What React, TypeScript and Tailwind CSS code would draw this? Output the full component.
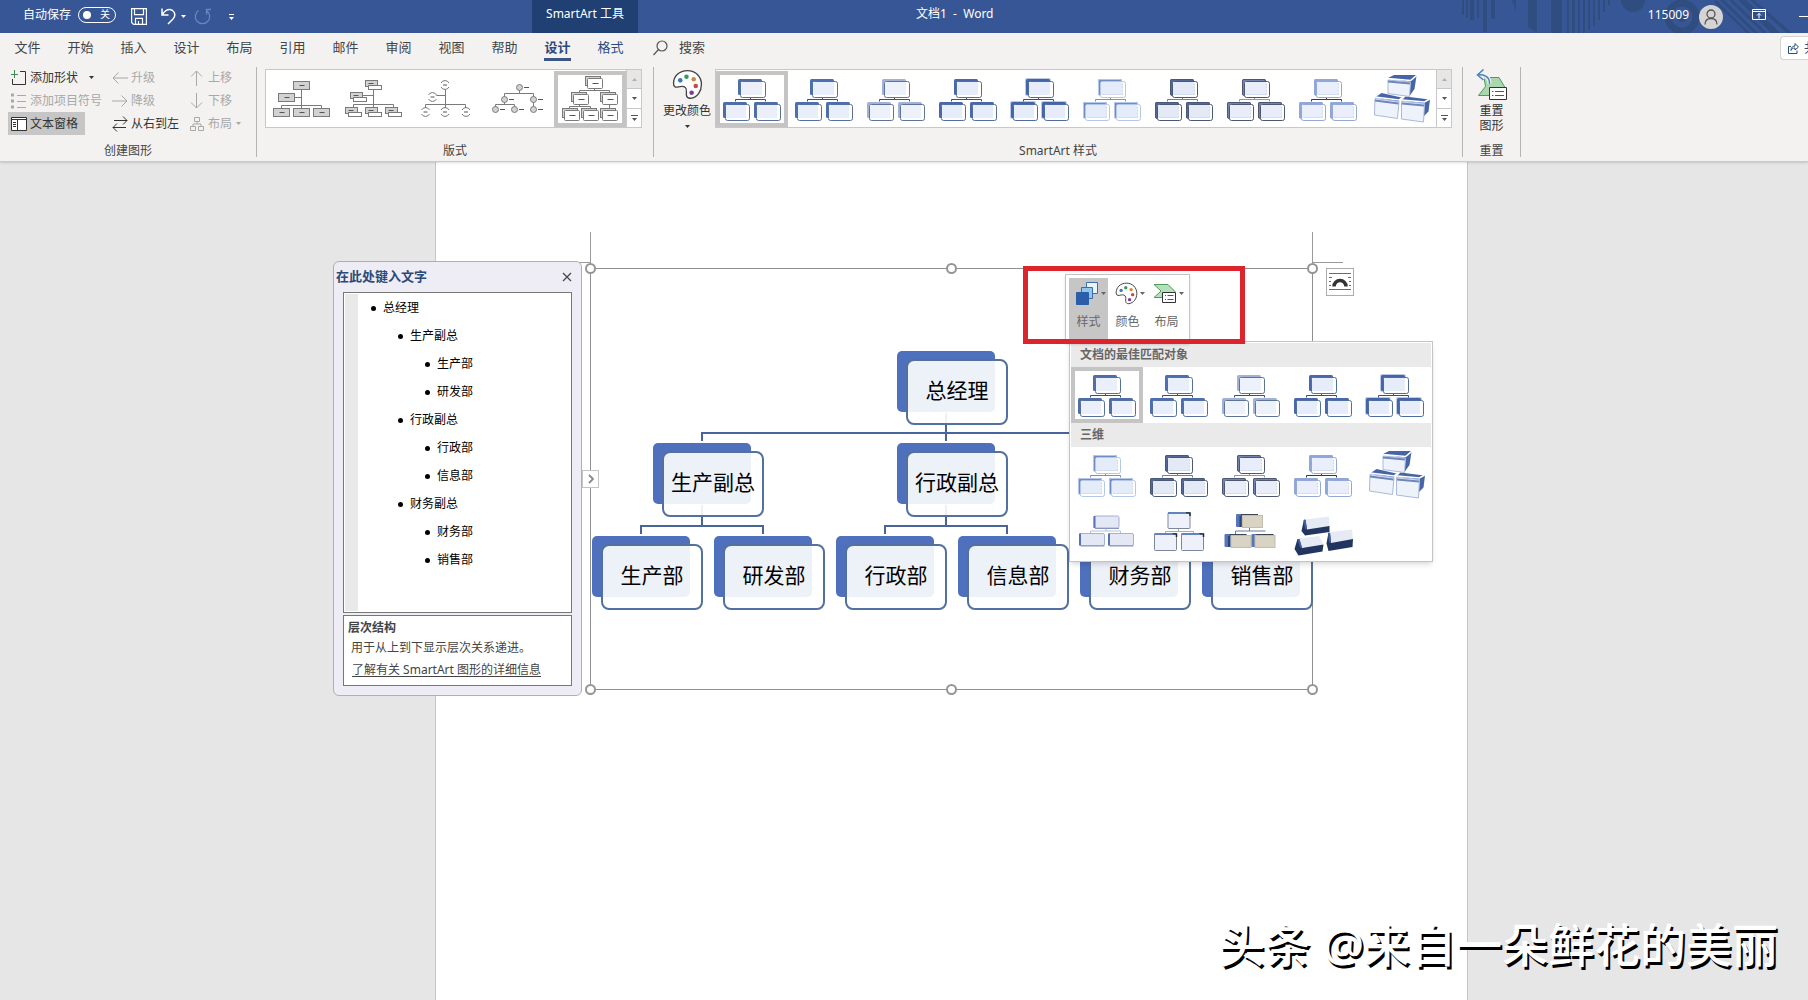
import type { ReactNode } from "react";

type ThumbStyle = {
  back: string;
  front: string;
  edge: string;
  line: string;
  glow?: boolean;
  bevel?: boolean;
};

const FLAT: ThumbStyle[] = [
  { back: "#4f6ea8", front: "#eaeffa", edge: "#54709c", line: "#3c4f70" },
  { back: "#4d6eb0", front: "#e8eefa", edge: "#54709c", line: "#3c4f70" },
  { back: "#a3b1d6", front: "#edf1fa", edge: "#5d7496", line: "#3c4f70" },
  { back: "#4a67ac", front: "#e6ecfa", edge: "#50709c", line: "#3c4f70" },
  { back: "#4565ab", front: "#e6ecfa", edge: "#4d6da0", line: "#3c4f70", glow: true },
];

const BEVELED: ThumbStyle[] = [
  { back: "#6f8cc6", front: "#e4ebf9", edge: "#b4c6ea", line: "#8193ac", bevel: true },
  { back: "#56689a", front: "#e4e9f6", edge: "#4a5878", line: "#6d7fa0", bevel: true },
  { back: "#7484ac", front: "#e8edf9", edge: "#4d5870", line: "#8a98ad", bevel: true },
  { back: "#8fa6da", front: "#e9eefa", edge: "#93a8d6", line: "#2d3a50", bevel: true },
];

const TABS = ["文件", "开始", "插入", "设计", "布局", "引用", "邮件", "审阅", "视图", "帮助", "设计", "格式"];

const OUTLINE = [
  { text: "总经理", level: 0 },
  { text: "生产副总", level: 1 },
  { text: "生产部", level: 2 },
  { text: "研发部", level: 2 },
  { text: "行政副总", level: 1 },
  { text: "行政部", level: 2 },
  { text: "信息部", level: 2 },
  { text: "财务副总", level: 1 },
  { text: "财务部", level: 2 },
  { text: "销售部", level: 2 },
];

const INDENT = ["pl-[13px]", "pl-[40px]", "pl-[67px]"];

// left/top of the coloured back plate, in document coordinates
const NODES = [
  { text: "总经理", x: 897, y: 189 },
  { text: "生产副总", x: 653, y: 281 },
  { text: "行政副总", x: 897, y: 281 },
  { text: "财务副总", x: 1141, y: 281 },
  { text: "生产部", x: 592, y: 374 },
  { text: "研发部", x: 714, y: 374 },
  { text: "行政部", x: 836, y: 374 },
  { text: "信息部", x: 958, y: 374 },
  { text: "财务部", x: 1080, y: 374 },
  { text: "销售部", x: 1202, y: 374 },
];

const HANDLES = [
  { x: 590, y: 106 },
  { x: 951, y: 106 },
  { x: 1312, y: 106 },
  { x: 590, y: 527 },
  { x: 951, y: 527 },
  { x: 1312, y: 527 },
];

function Caret({ className = "" }: { className?: string }) {
  return (
    <svg width="5" height="3" viewBox="0 0 5 3" className={`shrink-0 ${className}`} fill="currentColor">
      <path d="M0 0h5L2.5 3z" />
    </svg>
  );
}

function HierarchyThumb({ s }: { s: ThumbStyle }) {
  const boxes = [
    { bx: 22, by: 8, fx: 24.5, fy: 10.5, w: 25, h: 16 },
    { bx: 7, by: 31, fx: 9.5, fy: 33.5, w: 24, h: 16 },
    { bx: 38, by: 31, fx: 40.5, fy: 33.5, w: 24, h: 16 },
  ];
  return (
    <svg width="72" height="56" viewBox="0 0 72 56" fill="none">
      <path d="M19.500 30.500v-2h30v2M34.500 26v3" stroke={s.line} />
      {boxes.map((b) => (
        <g key={b.bx}>
          {s.glow && <rect x={b.bx - 1} y={b.by - 1} width="26" height="18" rx="2" fill={s.back} opacity="0.35" />}
          <rect x={b.bx} y={b.by} width="24" height="16" rx="1.5" fill={s.back} />
          {s.bevel && <rect x={b.bx + 0.5} y={b.by + 0.5} width="23" height="16" rx="1.5" stroke={s.edge} />}
          <rect x={b.fx} y={b.fy} width={b.w} height={b.h} rx="2" fill="#fff" stroke={s.edge} />
          <rect x={b.fx + 0.5} y={b.fy + 0.5} width={b.w - 4} height={b.h - 3} fill={s.front} />
          {s.bevel && (
            <path
              d={`M${b.fx + b.w - 3} ${b.fy + 2}v${b.h - 5}M${b.fx + 2} ${b.fy + b.h - 3}h${b.w - 5}`}
              stroke="#cdd7ec"
              strokeDasharray="2 1"
            />
          )}
        </g>
      ))}
    </svg>
  );
}

function BrickThumb() {
  return (
    <svg width="72" height="56" viewBox="0 0 72 56">
      <g fill="#4665a8">
        <path d="M24 7l6-3h22.500l-6 7zM46.500 11l6-6-2 13-5 7z" />
        <path d="M11 26.500l6.500-4.500 20 4.500-3 4z" />
        <path d="M37.500 29.500l4-4 24 3-5 4zM60.500 32l5.500-3.500-1.500 12-5 5z" />
      </g>
      <path d="M24 7.500l22.500 2 6-5M11 26l24 3 2.500-2M38 29l22.500 2 5-3" stroke="#fff" strokeWidth="1.500" fill="none" />
      <g fill="#eef2fb" stroke="#a9b9dc">
        <path d="M24 9l22.500 2-1 14.500-21.500-3z" />
        <path d="M11 27.500l24 3-1.500 17-23-3.500z" />
        <path d="M37.500 30.500l23 2-1 18.500-22-3z" />
      </g>
      <path d="M24 10.500l22 2M11 29.500l23.500 3M38 32.500l22 2" stroke="#6f86bb" strokeWidth="2" fill="none" />
    </svg>
  );
}

function InsetThumb() {
  const plates = [
    [23, 13],
    [8.5, 30.5],
    [37.5, 30.5],
  ];
  return (
    <svg width="72" height="56" viewBox="0 0 72 56" fill="none">
      <path d="M19.500 30v-2h30v2M35 26v2" stroke="#b6c0d2" />
      {plates.map(([x, y]) => (
        <g key={x}>
          <rect x={x} y={y} width="25" height="12" rx="1.500" fill="#e3e8f4" stroke="#a3b0d2" />
          <path d={`M${x + 0.5} ${y}v12`} stroke="#5873b3" strokeWidth="2" />
          <path d={`M${x + 1} ${y + 12.5}h24`} stroke="#8696bd" />
        </g>
      ))}
    </svg>
  );
}

function CartoonThumb() {
  const plates = [
    [25, 9.5, 16],
    [11.5, 30.5, 17],
    [38.5, 30.5, 17],
  ];
  return (
    <svg width="72" height="56" viewBox="0 0 72 56" fill="none">
      <path d="M22.500 30v-1.500h28v1.500M35.500 26v2" stroke="#a4adbd" />
      {plates.map(([x, y, h]) => (
        <g key={x}>
          <rect x={x} y={y} width="22" height={h} rx="1" fill="#eef1fa" stroke="#7d879c" />
          <path d={`M${x} ${y + 0.5}h18`} stroke="#6582c0" strokeWidth="2" />
          <path d={`M${x + 18} ${y + 0.5}h4v3`} stroke="#1d2740" strokeWidth="1.500" />
        </g>
      ))}
    </svg>
  );
}

function PowderThumb() {
  const plates = [
    [21, 11, 27.5],
    [9.5, 31, 16],
    [36.5, 31, 40],
  ];
  return (
    <svg width="72" height="56" viewBox="0 0 72 56" fill="none">
      <path d="M20.500 31v-3h30M34.500 25v3" stroke="#6d7890" />
      {plates.map(([x, y, fx]) => (
        <g key={x}>
          <rect x={x} y={y} width="22" height="13" rx="1" fill="#5576b8" />
          <path d={`M${x + 5} ${y + 1}h17`} stroke="#3c4456" strokeWidth="2" />
          <path d={`M${x + 4.5} ${y + 2}v11`} stroke="#2c427a" strokeWidth="2" />
          <rect x={fx} y={y + 1.5} width="20" height="12" fill="#d8d3c3" stroke="#c3bda9" />
        </g>
      ))}
    </svg>
  );
}

function BirdsEyeThumb() {
  return (
    <svg width="72" height="56" viewBox="0 0 72 56">
      <g fill="#22355f">
        <path d="M17 16.500L14.500 28l3.500 4.500L42.500 29v-6z" />
        <path d="M10.500 36L7.500 46l4 6.500 24-4 1-7z" />
        <path d="M41.500 29.500L39.500 40.500l2 7.500 24-4 .5-8z" />
      </g>
      <g fill="#e6eaf4">
        <path d="M18.500 16.500L42 13.500l.5 9.500L20 26.500z" />
        <path d="M12 35.500L32 33l4.500 8.500L15 45z" />
        <path d="M43 29L65 26.500l1 9.500L44 40z" />
      </g>
      <path d="M17.500 17l1.500 9M11.500 36l2.500 8.500M42 30l1 9.500" stroke="#3f5fa5" strokeWidth="2" fill="none" />
    </svg>
  );
}

function LayoutHierarchy() {
  return (
    <svg width="72" height="56" viewBox="0 0 72 56" fill="none" stroke="#7a7a7a">
      <path d="M35.500 19v18M28 26.500h7M15.500 37v-2.500h40v2.500" />
      {[[27.5, 10.5], [12.5, 22.5], [7.5, 37.5], [27.5, 37.5], [47.5, 37.5]].map(([x, y]) => (
        <g key={`${x}-${y}`}>
          <rect x={x} y={y} width="16" height="8" fill="#d2d2d2" />
          <path d={`M${x + 6} ${y + 4}h5`} stroke="#555" />
        </g>
      ))}
    </svg>
  );
}

function LayoutNameTitle() {
  return (
    <svg width="72" height="56" viewBox="0 0 72 56" fill="none" stroke="#7a7a7a">
      <path d="M35.500 19v18M24 24.500h11M15.500 37v-3.500h40v3.500" />
      {[[27.5, 9.5], [12.5, 21.5], [7.5, 36.5], [27.5, 36.5], [47.5, 36.5]].map(([x, y]) => (
        <g key={`${x}-${y}`}>
          <rect x={x} y={y} width="12" height="6" fill="#d2d2d2" />
          <path d={`M${x + 3} ${y + 3}h5`} stroke="#555" />
          <rect x={x + 3} y={y + 5} width="13" height="4" fill="#fff" />
        </g>
      ))}
    </svg>
  );
}

function LayoutHalfCircle() {
  return (
    <svg width="72" height="56" viewBox="0 0 72 56" fill="none" stroke="#7a7a7a">
      <path d="M35.500 19v18M26 24.500h9M15.500 37v-3.500h40v3.500" />
      {[[35, 14], [22.5, 26], [15.5, 41], [35, 41], [56, 41]].map(([x, y]) => (
        <g key={`${x}-${y}`}>
          <circle cx={x} cy={y} r="4" fill="#fff" stroke="none" />
          <path d={`M${x - 4} ${y - 2}a4.500 4.500 0 0 1 8 0M${x - 4} ${y + 2}a4.500 4.500 0 0 0 8 0`} />
          <path d={`M${x - 2} ${y}h4`} stroke="#555" />
        </g>
      ))}
    </svg>
  );
}

function LayoutCirclePicture() {
  return (
    <svg width="72" height="56" viewBox="0 0 72 56" fill="none" stroke="#7a7a7a">
      <path d="M37.500 19v3M22.500 26v-3.500h29V38M22.500 30v3M13.500 37v-3.500h19v3.500" />
      {[[37.5, 16.5], [22.5, 28.5], [51.5, 28.5], [13.5, 38.5], [32.5, 38.5], [51.5, 38.5]].map(([x, y]) => (
        <g key={`${x}-${y}`}>
          <circle cx={x} cy={y} r="3" fill="#d2d2d2" />
          <path d={`M${x + 4.5} ${y}h5`} stroke="#555" />
        </g>
      ))}
    </svg>
  );
}

function LayoutOrgPlates() {
  return (
    <svg width="72" height="56" viewBox="0 0 72 56" fill="none" stroke="#7a7a7a">
      <path d="M40.500 17v2M25.500 22v-2.500h30v2.500M25.500 33v2M15.500 38v-2.500h21v2.500M55.500 33v5" />
      {[[31.5, 5.5], [17.5, 21.5], [46.5, 21.5], [8.5, 37.5], [27.5, 37.5], [46.5, 37.5]].map(([x, y]) => (
        <g key={`${x}-${y}`}>
          <rect x={x} y={y} width="15" height="9" fill="#d2d2d2" />
          <rect x={x + 2} y={y + 2} width="15" height="10" rx="1" fill="#fff" />
          <path d={`M${x + 7} ${y + 7}h6`} stroke="#555" />
        </g>
      ))}
    </svg>
  );
}

function GalleryItem({ selected, label, children }: { selected?: boolean; label: string; children: ReactNode }) {
  return (
    <button type="button" aria-label={label} aria-pressed={!!selected} className="relative h-14 w-[72px] shrink-0 bg-white">
      {children}
      {selected && <span className="absolute inset-0 border-4 border-[#c4c4c4]" />}
    </button>
  );
}

function GalleryScroll() {
  return (
    <div className="flex w-[15px] shrink-0 flex-col divide-y divide-[#c8c8c8] border-l border-[#c8c8c8]">
      <button type="button" aria-label="向上" className="flex flex-1 items-center justify-center bg-[#e6e6e6] text-[#b0b0b0]">
        <Caret className="rotate-180" />
      </button>
      <button type="button" aria-label="向下" className="flex flex-1 items-center justify-center bg-white text-[#555]">
        <Caret />
      </button>
      <button type="button" aria-label="其他" className="flex flex-1 flex-col items-center justify-center gap-0.5 bg-white text-[#555]">
        <span className="h-px w-[7px] bg-[#555]" />
        <Caret />
      </button>
    </div>
  );
}

function PaletteIcon({ size }: { size: number }) {
  return (
    <svg width={size} height={size} viewBox="0 0 30 30">
      <path
        d="M15 1.500C7 1.500 1.500 7 1.500 14c0 2.500 1.500 4 4 3.500 3-.700 5.500-1.500 7.500.500 2 2 .500 5 1 7.500.400 2 2 3 4 2.800C24.500 27.500 28.500 21.500 28.500 15 28.500 7 22.500 1.500 15 1.500z"
        fill="#fff"
        stroke="#444"
        strokeWidth="1.300"
      />
      <circle cx="8" cy="11" r="2.200" fill="#3f76b8" />
      <circle cx="14" cy="7.500" r="2.200" fill="#3d9a5a" />
      <circle cx="21" cy="10" r="2.200" fill="#d08a3c" />
      <circle cx="23" cy="16.500" r="2.200" fill="#c24a4a" />
      <circle cx="19" cy="23" r="2.200" fill="#7a3f94" />
    </svg>
  );
}

function TitleDecoration() {
  return (
    <svg width="358" height="33" viewBox="0 0 358 33" className="absolute top-0 right-0" fill="#304d80">
      <path d="M12 0h2v15h-2zM16 0h2v18h-2zM20 0h4v20h-4zM27 0h2v18h-2zM33 0h4v32h-4zM41 0h4v19h-4z" />
      <path d="M62 0h4v12zM78 0h9v33l-9-6zM101 0h11v33h-11zM117 0h2v33h-2zM122 0h3v33h-3zM128 0h2v33h-2zM133 0h2v33h-2zM138 0h2v30h-2zM143 0h2v26h-2zM148 0h2v20h-2zM153 0h2v12h-2zM158 0h2v5h-2z" />
      <path d="M171 0h24a12 12 0 0 1-24 0z" />
      <circle cx="232" cy="17" r="14" fill="none" stroke="#304d80" strokeWidth="7" />
      <circle cx="232" cy="17" r="5" />
      <path d="M266 0l34 33h-3L264 2zM274 0l34 33h-4L270 0zM283 0l34 33h-4L279 0zM296 0l34 33h-9L288 0zM304 0l38 33h-5L300 0z" />
    </svg>
  );
}

function TitleBar() {
  return (
    <div className="relative flex h-[33px] items-center bg-[#375695] text-xs text-white">
      <TitleDecoration />
      <div className="flex w-[532px] shrink-0 items-center self-stretch pl-[23px]">
        <label className="flex items-center gap-[7px] pb-1">
          <span>自动保存</span>
          <input type="checkbox" className="peer sr-only" />
          <span className="flex h-4 w-[38px] items-center justify-between rounded-full border border-white pr-[5px] pl-1 text-[10px]">
            <span className="size-2 rounded-full bg-white" />
            <span>关</span>
          </span>
        </label>
        <button type="button" aria-label="保存" className="ml-[15px]">
          <svg width="16" height="17" viewBox="0 0 16 17" fill="none" stroke="#fff" strokeWidth="1.200">
            <path d="M.6.600h14.800v15.800H2.600L.6 14.400zM3.500.600v6h9v-6M4.500 16.400v-6h7v6M7.500 13v3" />
          </svg>
        </button>
        <button type="button" aria-label="撤消" className="ml-[14px] flex items-center gap-[5px]">
          <svg width="15" height="17" viewBox="0 0 15 17" fill="none" stroke="#fff" strokeWidth="1.500">
            <path d="M1 .500v6.500h6.500M1 7C4 2.500 8 .500 11.500 2.500c3 2 3 6 .500 8.500L7 16" />
          </svg>
          <Caret />
        </button>
        <button type="button" aria-label="重复" className="ml-2">
          <svg width="17" height="17" viewBox="0 0 17 17" fill="none" stroke="#6d86b8" strokeWidth="1.300">
            <path d="M4.500 2.500a7.200 7.200 0 1 0 8 0M12.500 6.500v-5H17" />
          </svg>
        </button>
        <button type="button" aria-label="自定义快速访问工具栏" className="ml-[18px] flex flex-col items-center gap-0.5">
          <span className="h-px w-[5px] bg-white" />
          <Caret />
        </button>
      </div>
      <div className="flex w-[106px] shrink-0 justify-center self-stretch bg-[#203f72] pt-1 leading-5">SmartArt 工具</div>
      <h1 className="ml-[278px] pb-1.5 whitespace-pre">文档1  -  Word</h1>
      <div className="relative ml-auto flex shrink-0 items-center">
        <span className="pb-1">115009</span>
        <span className="ml-[10px] flex size-6 items-center justify-center rounded-full bg-[#d4d4d4]">
          <svg width="14" height="16" viewBox="0 0 14 16" fill="none" stroke="#555" strokeWidth="1.300">
            <circle cx="7" cy="5" r="4" />
            <path d="M1 15.500C1 11.500 3.500 9.500 7 9.500s6 2 6 6" />
          </svg>
        </span>
        <button type="button" aria-label="功能区显示选项" className="ml-[29px] pb-1">
          <svg width="14" height="11" viewBox="0 0 14 11" fill="none" stroke="#fff">
            <path d="M.5.500h13v10H.5zM.5 2.500h13M7 9.500v-5M5 6.500l2-2 2 2" />
          </svg>
        </button>
        <button type="button" aria-label="最小化" className="ml-[33px] h-px w-[9px] bg-white" />
      </div>
    </div>
  );
}

function TabBar() {
  return (
    <nav className="flex h-[33px] items-stretch pl-px text-[13px] text-[#444]">
      {TABS.map((tab, i) => (
        <button
          type="button"
          key={i}
          className={`relative w-[53px] shrink-0 pb-1 ${i === 10 ? "font-bold text-[#2b4a80]" : ""} ${i === 11 ? "text-[#2b4a80]" : ""}`}
        >
          {tab}
          {i === 10 && <span className="absolute bottom-[5px] left-[13px] h-[3px] w-[27px] bg-[#3b5585]" />}
        </button>
      ))}
      <button type="button" className="ml-4 flex items-center gap-[11px] pb-1">
        <svg width="15" height="16" viewBox="0 0 15 16" fill="none" stroke="#555" strokeWidth="1.200">
          <circle cx="9" cy="6" r="5" />
          <path d="M5.500 9.500L.500 15" />
        </svg>
        搜索
      </button>
      <button
        type="button"
        className="mt-[3px] ml-auto flex h-6 w-7 items-center gap-[5px] overflow-hidden rounded-l-sm border border-r-0 border-[#d4d4d4] bg-white pl-[7px] whitespace-nowrap text-[#2b4a80]"
      >
        <svg width="11" height="12" viewBox="0 0 11 12" fill="none" stroke="currentColor" className="shrink-0">
          <path d="M3 4.500H.5v7h8.500v-3M3 8.500c0-3 1.500-4.500 4-4.500V1.500l3.500 3.500L7 8V6C5 6 4 6.500 3 8.500z" />
        </svg>
        共享
      </button>
    </nav>
  );
}

function RibbonGroup({ title, className, children }: { title: string; className: string; children: ReactNode }) {
  return (
    <>
      <section className={`flex shrink-0 flex-col ${className}`}>
        <div className="flex h-[75px]">{children}</div>
        <h2 className="text-center leading-5 text-[#444]">{title}</h2>
      </section>
      <div className="mt-px h-[90px] w-px shrink-0 bg-[#b4b4b4]" />
    </>
  );
}

type RibbonButtonProps = {
  icon: ReactNode;
  disabled?: boolean;
  pressed?: boolean;
  caret?: string;
  children: ReactNode;
};

function RibbonButton({ icon, disabled, pressed, caret, children }: RibbonButtonProps) {
  return (
    <button
      type="button"
      disabled={disabled}
      className={`flex h-[23px] items-center self-start whitespace-nowrap ${disabled ? "text-[#a8a8a8]" : "text-[#333]"} ${pressed ? "bg-[#c6c6c6] pr-[7px]" : ""}`}
    >
      <span className="flex w-[22px] shrink-0 items-center pl-[3px]">{icon}</span>
      {children}
      {caret && <Caret className={caret} />}
    </button>
  );
}

function Arrow({ d }: { d: string }) {
  return (
    <svg width="16" height="16" viewBox="0 0 16 16" fill="none" stroke="currentColor" className="shrink-0">
      <path d={d} />
    </svg>
  );
}

function CreateGroup() {
  return (
    <div className="flex pl-2">
      <div className="flex w-[101px] flex-col">
        <RibbonButton
          caret="ml-[11px]"
          icon={
            <svg width="16" height="16" viewBox="0 0 16 16" fill="none" stroke="#333">
              <path d="M9 1.500h5.500v13H1.500V9" />
              <path d="M3.500 0v8M0 4.500h7" stroke="#3f8f4f" />
            </svg>
          }
        >
          添加形状
        </RibbonButton>
        <RibbonButton
          disabled
          icon={
            <svg width="16" height="16" viewBox="0 0 16 16" fill="none" stroke="currentColor">
              <path d="M6 2.500h9M6 8.500h9M6 14.500h9" />
              <path d="M0 2h3M0 8h3M0 14h3" strokeWidth="3" />
            </svg>
          }
        >
          添加项目符号
        </RibbonButton>
        <RibbonButton
          pressed
          icon={
            <svg width="16" height="14" viewBox="0 0 16 14" fill="none" stroke="#333">
              <path d="M.5.500h15v13H.5z" fill="#fff" />
              <path d="M.5 2.500h15M6.500 2.500v11M2 5.500h3M2 7.500h3M2 9.500h3" />
            </svg>
          }
        >
          文本窗格
        </RibbonButton>
      </div>
      <div className="flex w-[77px] flex-col">
        <RibbonButton disabled icon={<Arrow d="M16 8H1M6.500 2.500L1 8l5.500 5.500" />}>
          升级
        </RibbonButton>
        <RibbonButton disabled icon={<Arrow d="M0 8h15M9.500 2.500L15 8l-5.500 5.500" />}>
          降级
        </RibbonButton>
        <RibbonButton icon={<Arrow d="M2 4.500h13M11 .5l4 4-4 4M14 11.500H1M5 7.500l-4 4 4 4" />}>从右到左</RibbonButton>
      </div>
      <div className="flex flex-col">
        <RibbonButton disabled icon={<Arrow d="M7.500 16V1M2 6.500L7.500 1 13 6.500" />}>
          上移
        </RibbonButton>
        <RibbonButton disabled icon={<Arrow d="M7.500 0v15M2 9.500L7.500 15 13 9.500" />}>
          下移
        </RibbonButton>
        <RibbonButton disabled caret="ml-1" icon={<Arrow d="M5.500 1.500h5v4h-5zM1.500 10.500h5v4h-5zM9.500 10.500h5v4h-5zM8 5.500V8M4 10.500V8h8v2.500" />}>
          布局
        </RibbonButton>
      </div>
    </div>
  );
}

function Ribbon() {
  return (
    <div className="flex h-[95px] text-xs">
      <RibbonGroup title="创建图形" className="w-[256px]">
        <CreateGroup />
      </RibbonGroup>
      <RibbonGroup title="版式" className="w-[396px] px-2">
        <div className="mt-[3px] flex h-[59px] border border-[#c8c8c8] bg-white">
          <div className="flex pt-px">
            <GalleryItem label="层次结构图"><LayoutHierarchy /></GalleryItem>
            <GalleryItem label="姓名和职务"><LayoutNameTitle /></GalleryItem>
            <GalleryItem label="半圆组织结构图"><LayoutHalfCircle /></GalleryItem>
            <GalleryItem label="圆形图片层次结构"><LayoutCirclePicture /></GalleryItem>
            <GalleryItem label="层次结构" selected><LayoutOrgPlates /></GalleryItem>
          </div>
          <GalleryScroll />
        </div>
      </RibbonGroup>
      <RibbonGroup title="SmartArt 样式" className="w-[808px]">
        <button type="button" className="ml-[5px] flex w-14 flex-col items-center pt-[3px] text-[#333]">
          <PaletteIcon size={31} />
          <span className="mt-px leading-5">更改颜色</span>
          <Caret className="mt-1" />
        </button>
        <div className="mt-[3px] flex h-[59px] border border-[#c8c8c8] bg-white">
          <div className="flex pt-px">
            {[...FLAT, ...BEVELED].map((s, i) => (
              <GalleryItem key={i} label={`样式 ${i + 1}`} selected={i === 0}>
                <HierarchyThumb s={s} />
              </GalleryItem>
            ))}
            <GalleryItem label="砖块场景"><BrickThumb /></GalleryItem>
          </div>
          <GalleryScroll />
        </div>
      </RibbonGroup>
      <RibbonGroup title="重置" className="w-[57px]">
        <button type="button" className="flex w-full flex-col items-center pt-[3px] leading-[15px] text-[#333]">
          <svg width="32" height="32" viewBox="0 0 32 32" fill="none">
            <path d="M8 8.500h15l6 10-6 8H2.500l7-9z" fill="#a9d8ae" stroke="#4f9a5c" />
            <path d="M1 6C7 5 14 7 13.500 15M7.500.500L1.500 6l6 5" stroke="#f3f2f1" strokeWidth="4" />
            <path d="M1 6C7 5 14 7 13.500 15M7.500.500L1.500 6l6 5" stroke="#4a82bd" strokeWidth="1.500" />
            <path d="M13.500 18.500h17v12h-17z" fill="#fff" stroke="#333" />
            <path d="M16 22.500h1.500M19 22.500h9M16 26.500h1.500M19 26.500h9" stroke="#555" />
          </svg>
          <span className="mt-0.5">重置<br />图形</span>
        </button>
      </RibbonGroup>
    </div>
  );
}

function TextPane() {
  return (
    <aside className="absolute top-[99px] left-[333px] w-[249px] rounded-md border border-[#a9b1b8] bg-[#eeedf5] px-[9px] pb-[9px] text-xs">
      <div className="-ml-[7px] flex h-[30px] items-center justify-between pb-px">
        <h2 className="text-[13px] font-bold text-[#2c4a78]">在此处键入文字</h2>
        <button type="button" aria-label="关闭">
          <svg width="10" height="10" viewBox="0 0 10 10" stroke="#444" strokeWidth="1.200">
            <path d="M1 1l8 8M9 1L1 9" />
          </svg>
        </button>
      </div>
      <div className="flex h-[321px] border border-[#777] bg-white p-px">
        <div className="w-[13px] shrink-0 bg-[#e9e9e9]" />
        <ul className="leading-7 text-black">
          {OUTLINE.map((item) => (
            <li key={item.text} className={`flex h-7 items-center gap-[7px] ${INDENT[item.level]}`}>
              <span className="size-[5px] rounded-full bg-black" />
              {item.text}
            </li>
          ))}
        </ul>
      </div>
      <div className="mt-0.5 h-[71px] border border-[#777] bg-white pt-[3px] pl-1 text-[#444]">
        <h3 className="leading-[18px] font-bold">层次结构</h3>
        <p className="pl-[3px] leading-[22px]">用于从上到下显示层次关系递进。</p>
        <a href="#help" className="ml-1 leading-[22px] underline underline-offset-2">了解有关 SmartArt 图形的详细信息</a>
      </div>
    </aside>
  );
}

function Diagram() {
  return (
    <>
      <div className="absolute top-[106px] left-[590px] h-[422px] w-[723px] border border-[#8f8f8f]" />
      <svg className="absolute top-0 left-0" width="1440" height="540" fill="none">
        <path d="M590.500 70v36M579 100.500h11M1312.500 70v36M1313 100.500h30" stroke="#9a9a9a" />
        <path
          d="M946 251v28M702 279v-8h488v8M702 343v22M641 372v-8h122v8M946 343v22M885 372v-8h122v8M1190 343v22M1129 372v-8h122v8"
          stroke="#48659b"
          strokeWidth="2"
        />
      </svg>
      {NODES.map((n) => (
        <div key={n.text} className="absolute h-[74px] w-[111px]" style={{ left: n.x, top: n.y }}>
          <div className="h-[61px] w-[98px] rounded-[5px] bg-[#4f71bd]" />
          <div className="absolute right-0 bottom-0 flex h-[66px] w-[102px] items-center justify-center rounded-lg border-2 border-[#52719f] bg-white/90 pb-0.5 text-[21px] font-normal whitespace-nowrap text-black">
            {n.text}
          </div>
        </div>
      ))}
      {HANDLES.map((h) => (
        <span
          key={`${h.x}-${h.y}`}
          className="absolute size-[11px] -translate-x-[5px] -translate-y-[5px] rounded-full border-2 border-[#959595] bg-white"
          style={{ left: h.x, top: h.y }}
        />
      ))}
      <button
        type="button"
        aria-label="展开文本窗格"
        className="absolute top-[308px] left-[582px] flex h-[18px] w-[17px] items-center justify-center border border-[#c4c4c4] bg-white"
      >
        <svg width="6" height="10" viewBox="0 0 6 10" fill="none" stroke="#888" strokeWidth="1.800">
          <path d="M1 1l4 4-4 4" />
        </svg>
      </button>
      <button type="button" aria-label="布局选项" className="absolute top-[106px] left-[1326px] size-7 border border-[#ababab] bg-white">
        <svg width="26" height="26" viewBox="0 0 26 26" fill="none" stroke="#44788a">
          <path d="M2 4.500h22M2 20.500h22M2 8.500h3M21 8.500h3M2 12.500h2M22 12.500h2M2 16.500h2M22 16.500h2" />
          <path d="M7 17.500a6 6 0 0 1 12 0" stroke="#333" strokeWidth="3.500" />
        </svg>
      </button>
    </>
  );
}

function MiniToolbar() {
  const item = "flex h-[62px] w-[39px] flex-col items-center pt-[4px]";
  return (
    <div className="absolute top-[112px] left-[1065px] flex border border-[#c4c4c4] bg-white p-[3px] text-xs text-[#666] shadow-sm">
      <button type="button" aria-pressed="true" className={`${item} bg-[#c6c6c6]`}>
        <span className="flex items-center gap-0.5 pl-1">
          <svg width="23" height="23" viewBox="0 0 23 23" stroke="#3b6ea8">
            <path d="M10.500.500h11v11h-11z" fill="#e8f3fb" />
            <path d="M5.500 5.500h11v11h-11z" fill="#93c4ea" />
            <path d="M.5 10.500h12v12H.5z" fill="#2a5ea8" stroke="#2a5ea8" />
          </svg>
          <Caret />
        </span>
        <span className="mt-[7px] leading-5">样式</span>
      </button>
      <button type="button" className={item}>
        <span className="flex items-center gap-0.5 pl-1">
          <PaletteIcon size={23} />
          <Caret />
        </span>
        <span className="mt-[7px] leading-5">颜色</span>
      </button>
      <button type="button" className={item}>
        <span className="flex items-center gap-0.5 pl-1">
          <svg width="24" height="23" viewBox="0 0 24 23" fill="none">
            <path d="M1 2.500h14l7 7-6 6H1l7-6.500z" fill="#b5e0ba" stroke="#4f9a5c" />
            <path d="M9.500 10.500h13v10h-13z" fill="#fff" stroke="#333" />
            <path d="M12 13.500h1M14.500 13.500h6M12 17.500h1M14.500 17.500h6" stroke="#555" />
          </svg>
          <Caret />
        </span>
        <span className="mt-[7px] leading-5">布局</span>
      </button>
    </div>
  );
}

function StyleMenu() {
  return (
    <div className="absolute top-[179px] left-[1069px] w-[364px] border border-[#c4c4c4] bg-white px-px pt-px pb-0.5 text-xs shadow-md">
      <h3 className="h-6 bg-[#eaeaea] pl-[9px] leading-6 font-bold text-[#666]">文档的最佳匹配对象</h3>
      <div className="flex">
        {FLAT.map((s, i) => (
          <GalleryItem key={i} label={`最佳匹配 ${i + 1}`} selected={i === 0}>
            <HierarchyThumb s={s} />
          </GalleryItem>
        ))}
      </div>
      <h3 className="h-6 bg-[#eaeaea] pl-[9px] leading-6 font-bold text-[#666]">三维</h3>
      <div className="flex flex-wrap">
        {BEVELED.map((s, i) => (
          <GalleryItem key={i} label={`三维 ${i + 1}`}>
            <HierarchyThumb s={s} />
          </GalleryItem>
        ))}
        <GalleryItem label="砖块场景"><BrickThumb /></GalleryItem>
        <GalleryItem label="嵌入"><InsetThumb /></GalleryItem>
        <GalleryItem label="卡通"><CartoonThumb /></GalleryItem>
        <GalleryItem label="粉末"><PowderThumb /></GalleryItem>
        <GalleryItem label="鸟瞰场景"><BirdsEyeThumb /></GalleryItem>
      </div>
    </div>
  );
}

export default function App() {
  return (
    <div className="flex min-h-screen flex-col overflow-hidden bg-[#e6e6e6] font-['Noto_Sans','Noto_Sans_CJK_SC',sans-serif]">
      <header className="relative z-10 border-b border-[#c9c9c9] bg-[#f3f2f1] shadow-sm">
        <TitleBar />
        <TabBar />
        <Ribbon />
      </header>

      <main className="relative flex flex-1">
        {/* page sheet */}
        <div className="ml-[435px] w-[1033px] shrink-0 border-x border-[#c6c6c6] bg-white" />
        <Diagram />
        <TextPane />
        <StyleMenu />
        <MiniToolbar />
        {/* highlight around the mini toolbar */}
        <div className="pointer-events-none absolute top-[104px] left-[1023px] h-[78px] w-[222px] border-5 border-[#dc242c]" />
        <p className="absolute right-[30px] bottom-[26px] text-[46px] leading-[60px] font-medium whitespace-nowrap text-white [text-shadow:2px_3px_0_#000]">
          头条 @来自一朵鲜花的美丽
        </p>
      </main>
    </div>
  );
}
